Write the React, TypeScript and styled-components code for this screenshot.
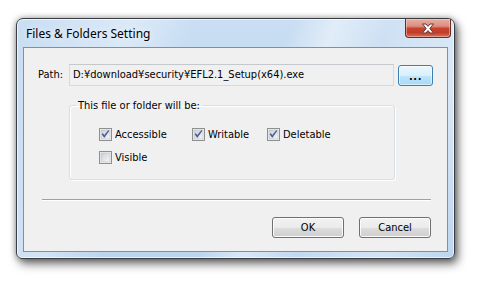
import React from "react";
import styled, { createGlobalStyle } from "styled-components";

const Global = createGlobalStyle`
  html, body { margin: 0; padding: 0; background: #ffffff; }
  body { width: 477px; height: 281px; overflow: hidden; }
`;

const UI_FONT = `Tahoma, "DejaVu Sans Condensed", "DejaVu Sans", sans-serif`;

const Window = styled.div`
  margin: 18px 0 0 16px;
  width: 439px;
  height: 241px;
  box-sizing: border-box;
  border: 1px solid #3a3d42;
  border-radius: 7px 7px 6px 6px;
  padding: 0 6px 6px 6px;
  display: flex;
  flex-direction: column;
  background:
    linear-gradient(112deg,
      rgba(255,255,255,0) 0%,
      rgba(255,255,255,0.35) 22%,
      rgba(255,255,255,0) 34%,
      rgba(255,255,255,0) 52%,
      rgba(255,255,255,0.45) 60%,
      rgba(255,255,255,0.1) 70%,
      rgba(255,255,255,0.35) 86%,
      rgba(255,255,255,0) 100%),
    linear-gradient(180deg, #c9def3 0%, #bcd5ef 100%);
  box-shadow:
    inset 0 0 0 1px rgba(255,255,255,0.65),
    0 0 6px rgba(0,0,0,0.35),
    3px 5px 10px rgba(0,0,0,0.55);
`;

const TitleBar = styled.div`
  height: 28px;
  display: flex;
  align-items: flex-start;
  justify-content: space-between;
`;

const Title = styled.div`
  margin: 7px 0 0 3px;
  font-family: "Noto Sans", "Open Sans", sans-serif;
  font-size: 12px;
  line-height: 16px;
  color: #000;
  text-shadow: 0 0 6px rgba(255,255,255,0.9);
`;

const CloseButton = styled.div`
  width: 46px;
  height: 19px;
  margin-right: -3px;
  box-sizing: border-box;
  border: 1px solid #6a2b22;
  border-top: none;
  border-radius: 0 0 4px 4px;
  background: linear-gradient(180deg, #e8aea2 0%, #dc8d7e 40%, #c7432f 52%, #c23d28 75%, #d6705c 100%);
  box-shadow: inset 0 0 0 1px rgba(255,220,210,0.45);
  display: flex;
  align-items: center;
  justify-content: center;
`;

const Client = styled.div`
  flex: 1;
  border: 1px solid #7f90a6;
  background: #f0f0f0;
  display: flex;
  flex-direction: column;
  font-family: ${UI_FONT};
  font-size: 11px;
  color: #000;
`;

const PathRow = styled.div`
  margin-top: 16px;
  padding-left: 14px;
  display: flex;
  align-items: flex-start;
`;

const PathLabel = styled.div`
  width: 31px;
  line-height: 22px;
`;

const PathField = styled.div`
  width: 325px;
  height: 22px;
  box-sizing: border-box;
  border: 1px solid #d6d9dd;
  border-top-color: #c5c8cc;
  background: #f0f0f0;
  padding-left: 3px;
  line-height: 20px;
  white-space: nowrap;
  overflow: hidden;
`;

const Button = styled.div<{ $focused?: boolean; $w: number }>`
  width: ${(p) => p.$w}px;
  height: 21px;
  box-sizing: border-box;
  border: 1px solid ${(p) => (p.$focused ? "#3c7fb1" : "#707070")};
  border-radius: 3px;
  background: ${(p) =>
    p.$focused
      ? "linear-gradient(180deg, #eaf6fd 0%, #d9f0fc 50%, #bee6fd 51%, #a7d9f5 100%)"
      : "linear-gradient(180deg, #f2f2f2 0%, #ebebeb 50%, #dddddd 51%, #cfcfcf 100%)"};
  box-shadow: inset 0 0 0 1px ${(p) => (p.$focused ? "rgba(255,255,255,0.55)" : "#fbfbfb")};
  display: flex;
  align-items: center;
  justify-content: center;
  line-height: 19px;
`;

const BrowseButton = styled(Button)`
  margin: 1px 0 0 4px;
  font-weight: bold;
  letter-spacing: 0.5px;
  padding-top: 2px;
`;

const Group = styled.fieldset`
  margin: 13px 0 0 45px;
  width: 326px;
  box-sizing: border-box;
  border: 1px solid #d5dfe5;
  border-radius: 3px;
  box-shadow: inset 1px 1px 0 #fff, 1px 1px 0 #fff;
  padding: 16px 0 15px 6px;
  min-width: 0;
`;

const Legend = styled.legend`
  margin-left: 0;
  padding: 0 2px;
  line-height: 13px;
  font-size: 11px;
`;

const CheckGrid = styled.div`
  margin-left: 23px;
  display: grid;
  grid-template-columns: 93px 75px auto;
  row-gap: 10px;
`;

const CheckItem = styled.label`
  display: flex;
  align-items: center;
  gap: 3px;
  height: 13px;
  line-height: 13px;
`;

const Separator = styled.div`
  margin: 19px 16px 0 18px;
  height: 1px;
  background: #a0a0a0;
  border-bottom: 1px solid #ffffff;
`;

const ButtonRow = styled.div`
  margin-top: 16px;
  padding-right: 16px;
  display: flex;
  justify-content: flex-end;
  gap: 15px;
`;

function CloseGlyph() {
  return (
    <svg width="14" height="11" viewBox="0 0 14 11">
      <path
        d="M1.5 1 H5 L7 3.4 L9 1 H12.5 L8.8 5.5 L12.5 10 H9 L7 7.6 L5 10 H1.5 L5.2 5.5 Z"
        fill="#ffffff"
        stroke="#5b3a36"
        strokeWidth="1"
        strokeLinejoin="round"
      />
    </svg>
  );
}

function CheckBox({ checked }: { checked: boolean }) {
  return (
    <svg width="13" height="13" viewBox="0 0 13 13">
      <defs>
        <linearGradient id="cbg" x1="0" y1="0" x2="1" y2="1">
          <stop offset="0" stopColor="#cbcfd5" />
          <stop offset="1" stopColor="#f6f6f6" />
        </linearGradient>
      </defs>
      <rect x="0.5" y="0.5" width="12" height="12" fill="#f4f4f4" stroke="#8e8f8f" />
      <rect x="2" y="2" width="9" height="9" fill="url(#cbg)" stroke="#b9bdc3" strokeWidth="0.6" />
      {checked && (
        <path
          d="M3 6.2 L5.3 9.4 L10 2.8 L9.3 2.4 L5.3 7.4 L3.9 5.6 Z"
          fill="#3f4f8c"
          stroke="#4a5c9c"
          strokeWidth="0.6"
          strokeLinejoin="round"
        />
      )}
    </svg>
  );
}

export default function App() {
  return (
    <>
      <Global />
      <Window>
        <TitleBar>
          <Title>Files &amp; Folders Setting</Title>
          <CloseButton>
            <CloseGlyph />
          </CloseButton>
        </TitleBar>
        <Client>
          <PathRow>
            <PathLabel>Path:</PathLabel>
            <PathField>D:¥download¥security¥EFL2.1_Setup(x64).exe</PathField>
            <BrowseButton $focused $w={35}>...</BrowseButton>
          </PathRow>
          <Group>
            <Legend>This file or folder will be:</Legend>
            <CheckGrid>
              <CheckItem>
                <CheckBox checked />
                Accessible
              </CheckItem>
              <CheckItem>
                <CheckBox checked />
                Writable
              </CheckItem>
              <CheckItem>
                <CheckBox checked />
                Deletable
              </CheckItem>
              <CheckItem>
                <CheckBox checked={false} />
                Visible
              </CheckItem>
            </CheckGrid>
          </Group>
          <Separator />
          <ButtonRow>
            <Button $w={72}>OK</Button>
            <Button $w={72}>Cancel</Button>
          </ButtonRow>
        </Client>
      </Window>
    </>
  );
}
